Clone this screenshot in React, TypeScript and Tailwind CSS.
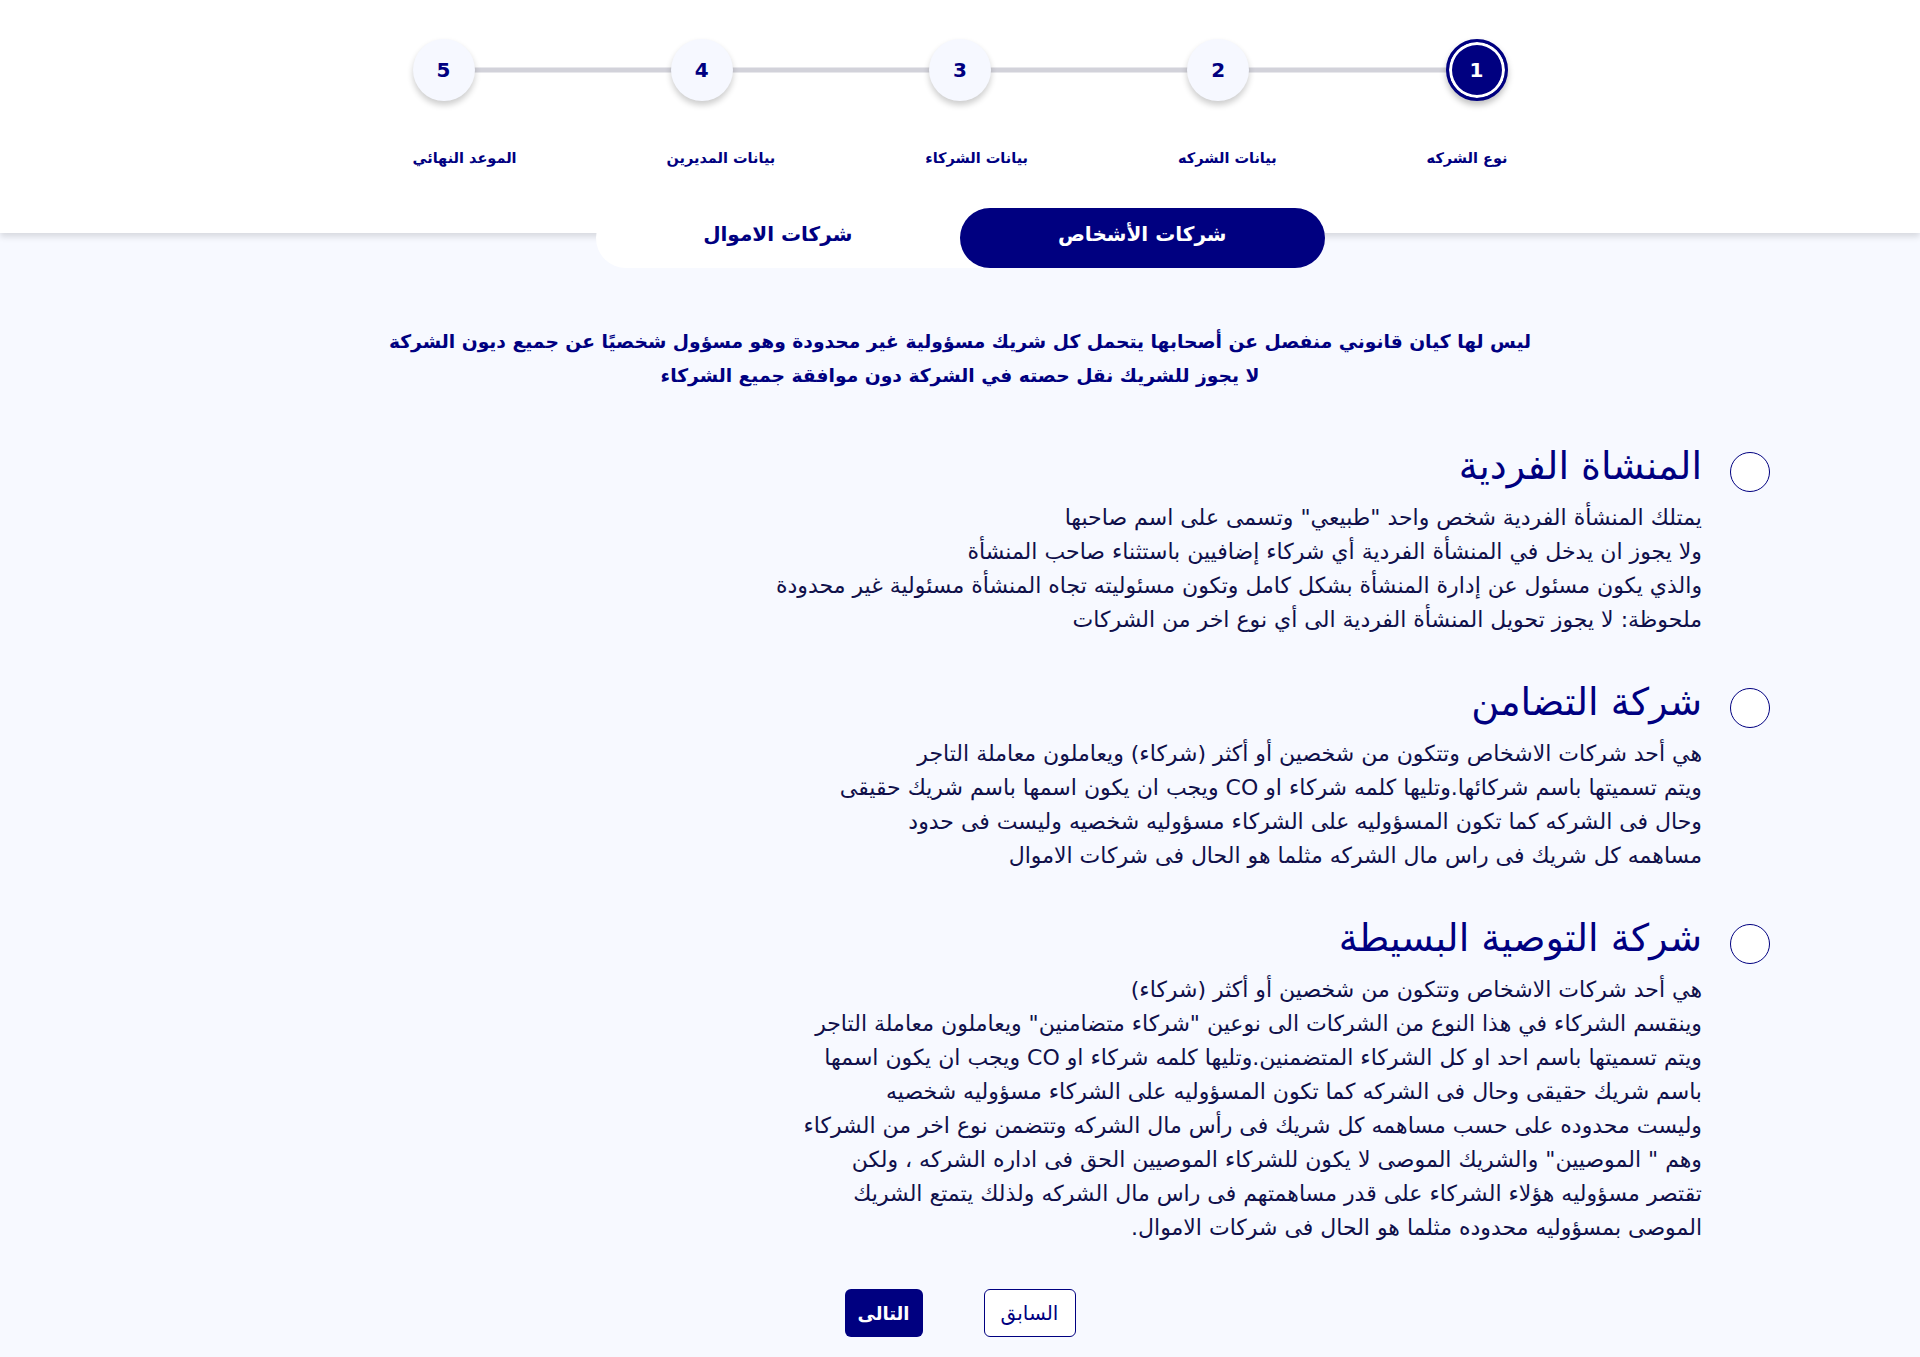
import { useState } from 'react'

const steps = ['نوع الشركه', 'بيانات الشركه', 'بيانات الشركاء', 'بيانات المديرين', 'الموعد النهائي']

const options = [
  {
    title: 'المنشاة الفردية',
    lines: [
      'يمتلك المنشأة الفردية شخص واحد "طبيعي" وتسمى على اسم صاحبها',
      'ولا يجوز ان يدخل في المنشأة الفردية أي شركاء إضافيين باستثناء صاحب المنشأة',
      'والذي يكون مسئول عن إدارة المنشأة بشكل كامل وتكون مسئوليته تجاه المنشأة مسئولية غير محدودة',
      'ملحوظة: لا يجوز تحويل المنشأة الفردية الى أي نوع اخر من الشركات',
    ],
  },
  {
    title: 'شركة التضامن',
    lines: [
      'هي أحد شركات الاشخاص وتتكون من شخصين أو أكثر (شركاء) ويعاملون معاملة التاجر',
      'ويتم تسميتها باسم شركائها.وتليها كلمه شركاء او CO ويجب ان يكون اسمها باسم شريك حقيقى',
      'وحال فى الشركه كما تكون المسؤوليه على الشركاء مسؤوليه شخصيه وليست فى حدود',
      'مساهمه كل شريك فى راس مال الشركه مثلما هو الحال فى شركات الاموال',
    ],
  },
  {
    title: 'شركة التوصية البسيطة',
    lines: [
      'هي أحد شركات الاشخاص وتتكون من شخصين أو أكثر (شركاء)',
      'وينقسم الشركاء في هذا النوع من الشركات الى نوعين "شركاء متضامنين" ويعاملون معاملة التاجر',
      'ويتم تسميتها باسم احد او كل الشركاء المتضمنين.وتليها كلمه شركاء او CO ويجب ان يكون اسمها',
      'باسم شريك حقيقى وحال فى الشركه كما تكون المسؤوليه على الشركاء مسؤوليه شخصيه',
      'وليست محدوده على حسب مساهمه كل شريك فى رأس مال الشركه وتتضمن نوع اخر من الشركاء',
      'وهم " الموصيين" والشريك الموصى لا يكون للشركاء الموصيين الحق فى اداره الشركه ، ولكن',
      'تقتصر مسؤوليه هؤلاء الشركاء على قدر مساهمتهم فى راس مال الشركه ولذلك يتمتع الشريك',
      'الموصى بمسؤوليه محدوده مثلما هو الحال فى شركات الاموال.',
    ],
  },
]

export default function App() {
  const [tab, setTab] = useState(0)
  const [picked, setPicked] = useState<number | null>(null)

  return (
    <div dir="rtl" className="min-h-screen bg-[#f7f9ff] text-[#000080]" style={{ fontFamily: '"DejaVu Sans", sans-serif' }}>
      {/* stepper */}
      <div className="bg-white pt-[39px] h-[233px] shadow-[0_4px_6px_rgba(0,0,0,0.12)]">
        <div className="w-[1095px] mx-auto">
          <div className="relative flex justify-between items-center">
            <div className="absolute left-[31px] right-[31px] top-1/2 -translate-y-1/2 h-[5px] bg-[#d2d2da]" />
            {steps.map((s, i) => (
              <div
                key={s}
                className={
                  i === 0
                    ? 'relative z-10 w-[62px] h-[62px] rounded-full bg-[#000080] border-[3px] border-[#000080] ring-[3px] ring-inset ring-white shadow-[0_4px_6px_rgba(0,0,0,0.25)] flex items-center justify-center text-white text-[20px] font-bold'
                    : 'relative z-10 w-[62px] h-[62px] rounded-full bg-[#f6f8ff] shadow-[0_4px_6px_rgba(0,0,0,0.2)] flex items-center justify-center text-[#000080] text-[20px] font-bold'
                }
              >
                {i + 1}
              </div>
            ))}
          </div>
          <div className="flex justify-between mt-[47px]">
            {steps.map(s => (
              <div key={s} className="text-[14.5px] font-bold text-[#000080]">{s}</div>
            ))}
          </div>
        </div>
      </div>

      {/* tabs */}
      <div className="flex justify-center -mt-[25px]">
        <div className="flex w-[729px] h-[60px] bg-white rounded-[30px]">
          {['شركات الأشخاص', 'شركات الاموال'].map((t, i) => (
            <button
              key={t}
              onClick={() => setTab(i)}
              className={
                tab === i
                  ? 'flex-1 rounded-full bg-[#000080] text-white text-[20px] font-bold pb-[8px]'
                  : 'flex-1 rounded-full text-[#000080] text-[20px] font-bold pb-[8px]'
              }
            >
              {t}
            </button>
          ))}
        </div>
      </div>

      <div className="text-center font-bold text-[18.7px] leading-[34px] mt-[57px]">
        <p>ليس لها كيان قانوني منفصل عن أصحابها يتحمل كل شريك مسؤولية غير محدودة وهو مسؤول شخصيًا عن جميع ديون الشركة</p>
        <p>لا يجوز للشريك نقل حصته في الشركة دون موافقة جميع الشركاء</p>
      </div>

      <div className="pr-[150px] mt-[45px] flex flex-col gap-[37px]">
        {options.map((o, i) => (
          <div key={o.title} className="flex gap-[28px]">
            <button
              onClick={() => setPicked(i)}
              className="mt-[14px] w-[40px] h-[40px] shrink-0 rounded-full border-[1.5px] border-[#000080] bg-white flex items-center justify-center"
            >
              {picked === i && <span className="w-[22px] h-[22px] rounded-full bg-[#000080]" />}
            </button>
            <div>
              <h2 className="text-[38px] leading-[56px] text-[#000080]">{o.title}</h2>
              <div className="text-[22px] leading-[34px] text-[#10104a] mt-[7px]">
                {o.lines.map(l => (
                  <p key={l}>{l}</p>
                ))}
              </div>
            </div>
          </div>
        ))}
      </div>

      <div className="flex justify-center gap-[61px] mt-[44px] pb-[20px]">
        <button className="w-[92px] h-[48px] rounded-[6px] border border-[#000080] bg-white text-[#000080] text-[20px]">السابق</button>
        <button className="w-[78px] h-[48px] rounded-[6px] bg-[#000080] text-white text-[18px] font-semibold">التالى</button>
      </div>
    </div>
  )
}
